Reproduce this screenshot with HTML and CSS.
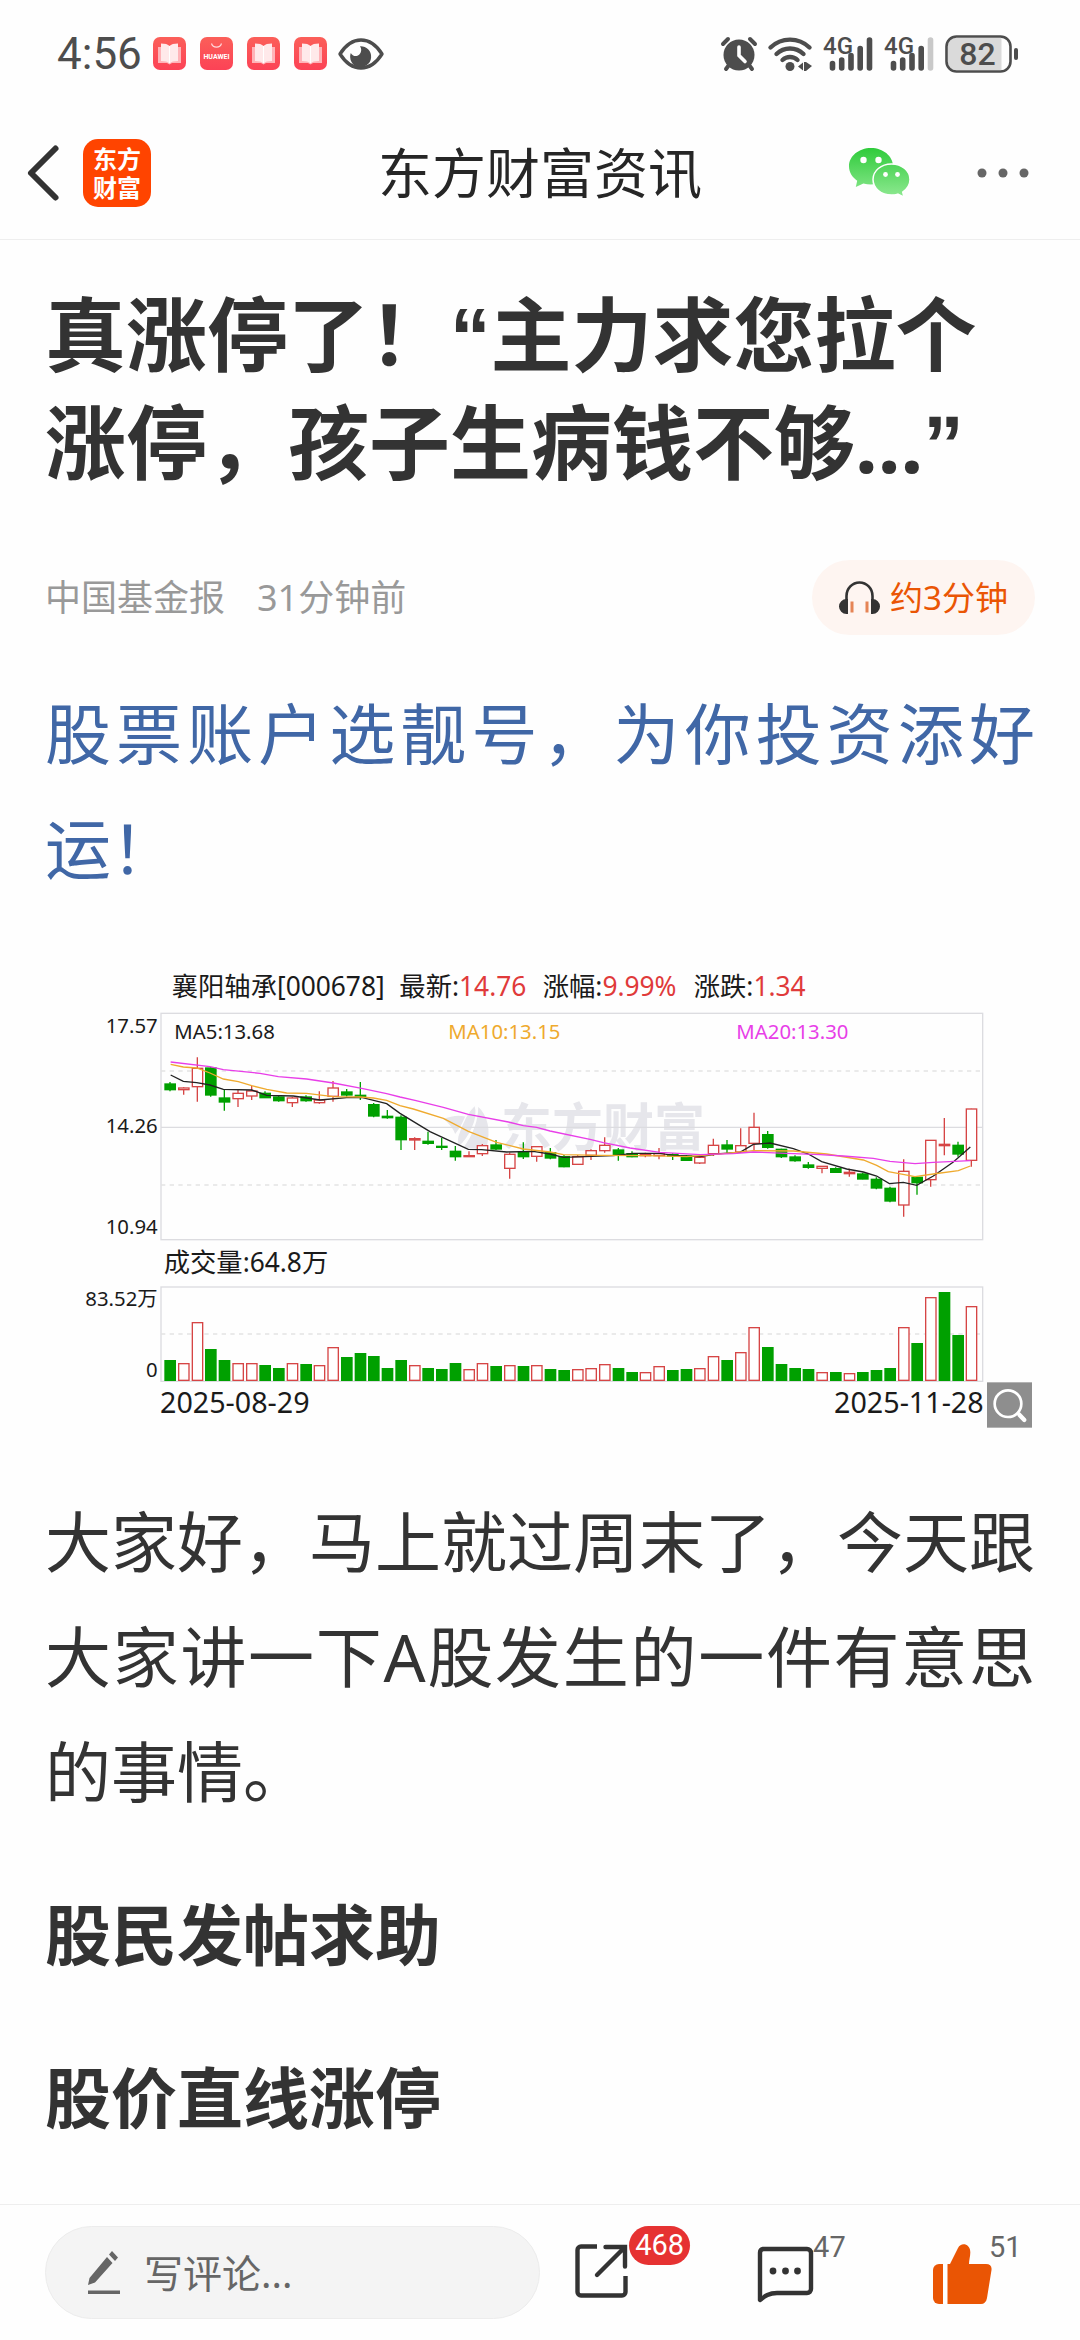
FILE: index.html
```html
<!DOCTYPE html>
<html lang="zh-CN">
<head>
<meta charset="utf-8">
<meta name="viewport" content="width=device-width, initial-scale=1">
<title>东方财富资讯</title>
<link rel="stylesheet" href="styles.css">
</head>
<body>
<svg class="defs" aria-hidden="true">
  <defs>
    <linearGradient id="red" x1="0" y1="0" x2="0" y2="1"><stop offset="0" stop-color="#fb5f59"/><stop offset="1" stop-color="#fc4256"/></linearGradient>
    <linearGradient id="green" gradientUnits="userSpaceOnUse" x1="0" y1="0" x2="0" y2="48"><stop offset="0" stop-color="#2fcb3b"/><stop offset="1" stop-color="#8ce88f"/></linearGradient>
    <symbol id="book" viewBox="0 0 33 33">
      <rect width="33" height="33" rx="7" fill="url(#red)"/>
      <path d="M5 10h23v16H19l-2.500 1.500L14 26H5z" fill="#ffb3b8"/>
      <path d="M8 6.500c4 0 7 .8 8.500 2.500C18 7.300 21 6.500 25 6.500V24c-4 0-7 .8-8.500 2.500C15 24.800 12 24 8 24z" fill="#ffe9ea"/>
      <path d="M16.500 9v17" stroke="#fff" stroke-width="1"/>
    </symbol>
  </defs>
</svg>

<div class="status">
  <div class="status-side">
    <span class="clock">4:56</span>
    <div class="notices">
      <svg width="33" height="33"><use href="#book"/></svg>
      <svg width="33" height="33" viewBox="0 0 33 33"><rect width="33" height="33" rx="7" fill="url(#red)"/><path d="M11.500 6.500a5.200 5 0 0 0 10 0" fill="none" stroke="#ffd9dc" stroke-width="1.200"/><text class="tiny" x="16.500" y="21.500">HUAWEI</text></svg>
      <svg width="33" height="33"><use href="#book"/></svg>
      <svg width="33" height="33"><use href="#book"/></svg>
    </div>
    <svg width="46" height="32" viewBox="0 0 46 32"><path d="M2 16C8 6.500 15 2 23 2s15 4.500 21 14c-6 9.500-13 14-21 14S8 25.500 2 16z" fill="none" stroke="#4d4d4d" stroke-width="3.400" stroke-linejoin="round"/><path d="M22 8.200A10.500 10.500 0 1 1 12.800 15c1.700 3.400 5.800 4 8.300 1.700 2.700-2.500 2.600-6.300.9-8.500z" fill="#4d4d4d"/></svg>
  </div>
  <div class="status-side icons">
    <svg width="36" height="34" viewBox="0 0 36 34"><g fill="none" stroke="#4d4d4d" stroke-width="4" stroke-linecap="round"><path d="M2 7l5-5M34 7l-5-5M8 28l-3 4M28 28l3 4"/></g><circle cx="18" cy="18" r="15.500" fill="#4d4d4d"/><path d="M18 10v8.500l6 6" fill="none" stroke="#fff" stroke-width="3.600" stroke-linecap="round"/></svg>
    <svg width="44" height="34" viewBox="0 0 44 34"><g fill="none" stroke="#4d4d4d" stroke-width="4.400" stroke-linecap="round"><path d="M2.500 10.500a28 28 0 0 1 39 0M8.500 17a19.500 19.500 0 0 1 27 0M14.500 23a11 11 0 0 1 15 0"/></g><circle cx="22" cy="29.500" r="4.500" fill="#4d4d4d"/><path d="M30 29.500l5-4v8zM36 25v9h2v-9zM38 25l6 4-6 5z" fill="#4d4d4d"/></svg>
    <svg width="50" height="34" viewBox="0 0 50 34"><text class="net" x="0" y="17">4G</text><g stroke="#4d4d4d" stroke-width="5.600" stroke-linecap="round"><path d="M9.500 26.500v4.500M18.700 23v8M28 18.500v12.500M37.200 11.500v19.500M46.500 3v28"/></g></svg>
    <svg width="50" height="34" viewBox="0 0 50 34"><text class="net" x="0" y="17">4G</text><g stroke="#4d4d4d" stroke-width="5.600" stroke-linecap="round"><path d="M9.500 26.500v4.500M18.700 23v8M28 18.500v12.500M37.200 11.500v19.500"/><path d="M46.500 3v28" stroke="#c9c9c9"/></g></svg>
    <svg width="74" height="38" viewBox="0 0 74 38"><path d="M10 3h46.500v32H10a7 7 0 0 1-7-7V10a7 7 0 0 1 7-7z" fill="#dadada"/><rect x="1.500" y="1.500" width="64" height="35" rx="10" fill="none" stroke="#4d4d4d" stroke-width="2.600"/><rect x="69" y="13" width="4" height="12" rx="2" fill="#4d4d4d"/><text class="level" x="32.500" y="30">82</text></svg>
  </div>
</div>

<header class="bar">
  <div class="bar-side">
    <button class="plain" type="button" aria-label="返回"><svg width="32" height="56" viewBox="0 0 32 56"><path d="M28.500 3.500L4 28l24.500 24.500" fill="none" stroke="#333" stroke-width="6" stroke-linecap="round" stroke-linejoin="round"/></svg></button>
    <a class="logo" href="#">东方<br>财富</a>
  </div>
  <h2 class="bar-title">东方财富资讯</h2>
  <div class="bar-side end">
    <button class="plain" type="button" aria-label="分享到微信"><svg width="62" height="50" viewBox="0 0 62 50"><path d="M22 0C9.800 0 0 8.200 0 18.300 0 24.200 3.200 29.300 8.200 32.700L6.800 39l7.600-3.600c2.600.7 5 1.100 7.600 1.100 12.200 0 22-8.100 22-18.200S34.200 0 22 0z" fill="url(#green)"/><path d="M42.500 16C32 16 24 22.900 24 31.500S32 47 42.500 47c2.300 0 4.300-.3 6.300-.9l6.200 3-1.300-5.100C58.200 41 61 36.600 61 31.500 61 22.900 53 16 42.500 16z" fill="url(#green)" stroke="#fff" stroke-width="1.500"/><g fill="#fff"><circle cx="14.500" cy="12" r="3.200"/><circle cx="29.500" cy="12" r="3.200"/><circle cx="36.500" cy="26.500" r="2.400"/><circle cx="48.500" cy="26.500" r="2.400"/></g></svg></button>
    <button class="plain" type="button" aria-label="更多"><svg width="52" height="10" viewBox="0 0 52 10" fill="#666"><circle cx="5" cy="5" r="4.500"/><circle cx="26" cy="5" r="4.500"/><circle cx="47" cy="5" r="4.500"/></svg></button>
  </div>
</header>

<main class="article">
  <h1 class="headline">真涨停了！<span class="quote">“</span>主力求您拉个涨停，孩子生病钱不够...<span class="quote">”</span></h1>
  <div class="meta">
    <span>中国基金报</span><time>31分钟前</time>
    <button class="listen" type="button"><svg width="41" height="33" viewBox="0 0 41 33"><path d="M7.500 20v-5a13 13.500 0 0 1 26 0v5" fill="none" stroke="#333" stroke-width="2.600"/><path d="M9 18v15H7.500a7.500 7.500 0 0 1 0-15zM32 18v15h1.500a7.500 7.500 0 0 0 0-15z" fill="#333"/><path d="M13 20.500v11M28 20.500v11" stroke="#e58455" stroke-width="3"/></svg>约3分钟</button>
  </div>
  <p class="para"><a href="#">股票账户选靓号，为你投资添好运！</a></p>

  <svg class="chart" viewBox="0 0 2970 1434" role="img" aria-label="襄阳轴承日K线">
    <g class="watermark">
      <path d="M1192 506q44-18 78-6l-40 56q-8-26-38-50z"/>
      <path d="M1238 560q20-66 52-96 10 30-8 70-18 40-42 58-6-16-2-32z"/>
      <path d="M1252 594q46-60 46-128 50 46 28 130-36 6-74-2z"/>
      <text x="1368" y="588">东方财富</text>
    </g>
    <g class="grid">
      <rect x="348" y="190" width="2465" height="679"/>
      <rect x="348" y="1011" width="2465" height="283"/>
      <path d="M348 532h2465"/>
      <path class="dash" d="M348 363h2465M348 705h2465M348 1152h2465"/>
    </g>
    <g id="candles"></g>
    <g class="lines">
      <polyline stroke="#222" points="377,375 415,394 455,398 495,405 535,418 620,420 665,436 745,438 825,450 905,443 950,442 1025,461 1065,490 1155,545 1270,598 1310,599 1385,606 1465,604 1515,612 1555,622 1705,617 1765,610 1845,610 1885,616 1965,620 2025,611 2085,607 2125,583 2175,579 2245,596 2290,612 2330,635 2405,657 2455,666 2495,678 2533,701 2575,697 2615,706 2665,678 2725,636 2776,591"/>
      <polyline stroke="#efaa2e" points="377,343 415,351 455,354 495,369 535,387 580,395 620,407 665,418 725,429 785,430 865,440 945,441 985,444 1025,451 1065,467 1105,477 1195,505 1270,544 1355,577 1435,597 1515,606 1555,614 1665,616 1805,617 1925,620 2005,614 2125,602 2245,603 2345,612 2455,630 2495,646 2530,665 2610,680 2665,672 2740,662 2776,648"/>
      <polyline stroke="#e83ee8" points="377,336 495,350 535,359 645,370 700,380 785,387 865,399 950,415 1025,431 1065,441 1110,451 1195,472 1270,493 1390,516 1435,527 1475,532 1515,543 1635,568 1675,578 1755,594 1845,607 1965,614 2065,611 2125,606 2225,610 2325,614 2395,618 2485,625 2535,634 2610,641 2665,637 2776,632"/>
    </g>
    <g id="volumes"></g>
    <g class="label big">
      <text x="380" y="137">襄阳轴承[000678]</text>
      <text x="1063" y="137">最新:<tspan class="up">14.76</tspan></text>
      <text x="1493" y="137">涨幅:<tspan class="up">9.99%</tspan></text>
      <text x="1946" y="137">涨跌:<tspan class="up">1.34</tspan></text>
      <text x="356" y="966">成交量:64.8万</text>
    </g>
    <g class="label small">
      <text x="388" y="267">MA5:13.68</text>
      <text x="1210" y="267" class="ma10">MA10:13.15</text>
      <text x="2074" y="267" class="ma20">MA20:13.30</text>
      <g text-anchor="end">
        <text x="338" y="248">17.57</text>
        <text x="338" y="549">14.26</text>
        <text x="338" y="852">10.94</text>
        <text x="338" y="1068">83.52万</text>
        <text x="338" y="1282">0</text>
      </g>
    </g>
    <g class="label date">
      <text x="345" y="1390">2025-08-29</text>
      <text x="2816" y="1390" text-anchor="end">2025-11-28</text>
    </g>
    <rect x="2826" y="1297" width="135" height="136" fill="#8e8e8e"/>
    <g fill="none" stroke="#fff" stroke-linecap="round"><circle cx="2889" cy="1361" r="40" stroke-width="8"/><path d="M2918 1390l6 5" stroke-width="8"/><path d="M2923 1394l15 16" stroke-width="13"/></g>
  </svg>

  <p class="para">大家好，马上就过周末了，今天跟大家讲一下A股发生的一件有意思的事情。</p>
  <p class="para strong">股民发帖求助</p>
  <p class="para strong">股价直线涨停</p>
</main>

<footer class="tools">
  <label class="comment">
    <svg width="32" height="44" viewBox="0 0 32 44" fill="#666"><path d="M0 34l1.500-7L19 6l5.500 6L7 31.500zM21 3.500L24 0l6 6.500-3 3.500zM0 39.500h32V43H0z"/></svg>
    <input type="text" placeholder="写评论..." aria-label="写评论">
  </label>
  <div class="actions">
    <button class="action" type="button" aria-label="分享"><svg width="54" height="54" viewBox="0 0 54 54" fill="none" stroke="#333" stroke-width="4.400"><path d="M22 2.500H6A3.500 3.500 0 0 0 2.500 6v42A3.500 3.500 0 0 0 6 51.500h41a3.500 3.500 0 0 0 3.500-3.500V32"/><path d="M30.500 3H50v19.500M49 4L22 31" stroke-linecap="round"/></svg><span class="count badge">468</span></button>
    <button class="action" type="button" aria-label="评论"><svg width="56" height="56" viewBox="0 0 56 56"><path d="M6 5h44a4 4 0 0 1 4 4v36a4 4 0 0 1-4 4H20c-8 0-12 3-17 7V9a4 4 0 0 1 3-4z" fill="none" stroke="#333" stroke-width="4.400" stroke-linejoin="round"/><g fill="#333"><circle cx="16" cy="27" r="3.400"/><circle cx="28.500" cy="27" r="3.400"/><circle cx="40.500" cy="27" r="3.400"/></g></svg><span class="count">47</span></button>
    <button class="action" type="button" aria-label="点赞"><svg width="56" height="60" viewBox="0 0 56 60" fill="#ea5504"><path d="M6 20h4v40H6a6 6 0 0 1-6-6V26a6 6 0 0 1 6-6z"/><path d="M14.500 20H17L25 4c3-6 12-4.500 12.300 4 .1 4-1.300 8-1.300 12h17c4 0 6 2 5.500 6L54 54c-.7 4-3 6-6 6H14.500z"/></svg><span class="count">51</span></button>
  </div>
</footer>
<script src="chart.js"></script>
</body>
</html>
```

FILE: styles.css
```css
* { box-sizing: border-box; }

body {
  margin: 0;
  min-height: 100vh;
  display: flex;
  flex-direction: column;
  background: #fefefe;
  color: #333;
  font-family: "Noto Sans", "Noto Sans CJK SC", sans-serif;
}

h1, h2, p { margin: 0; }
svg { display: block; flex: none; overflow: visible; }
a { color: inherit; text-decoration: none; }
button { font: inherit; color: inherit; background: none; border: 0; padding: 0; }
.defs { position: absolute; width: 0; height: 0; }

/* system status line */
.status {
  height: 107px;
  padding: 0 61px 0 57px;
  display: flex;
  justify-content: space-between;
  align-items: center;
  color: #4d4d4d;
}
.status-side { display: flex; align-items: center; gap: 11px; }
.notices { display: flex; gap: 14px; }
.clock { font: 44px/52px Roboto, sans-serif; }
.tiny { font: bold 7px Roboto, sans-serif; fill: #fff; text-anchor: middle; }
.net { font: 500 24px Roboto, sans-serif; fill: #4d4d4d; }
.level { font: 500 32px Roboto, sans-serif; fill: #4d4d4d; text-anchor: middle; }

/* title bar */
.bar {
  height: 133px;
  padding: 0 51px 0 27px;
  display: flex;
  align-items: center;
  border-bottom: 1px solid #eee;
}
.bar-side { flex: 1; display: flex; align-items: center; gap: 24px; }
.bar-side.end { justify-content: flex-end; gap: 66px; }
.bar-title { font-size: 54px; line-height: 80px; font-weight: 400; color: #262626; padding-left: 24px; }
.logo {
  width: 68px;
  height: 68px;
  padding-top: 4px;
  border-radius: 15px;
  background: #ff4400;
  color: #fff;
  text-align: center;
  font-family: "Noto Sans CJK SC", sans-serif;
  font-size: 24px;
  line-height: 29px;
  font-weight: 700;
}

/* article */
.article { padding: 40px 45px 48px; flex: 1; }
.headline { font-size: 81px; line-height: 108px; font-weight: 700; }
.quote { font-family: "Liberation Sans", sans-serif; line-height: 60px; }
.meta {
  margin-top: 64px;
  display: flex;
  align-items: center;
  gap: 32px;
  font-size: 36px;
  line-height: 48px;
  color: #999;
}
.listen {
  margin-left: auto;
  height: 75px;
  padding: 0 27px;
  display: flex;
  align-items: center;
  gap: 10px;
  border-radius: 38px;
  background: #fef5f1;
  color: #ea5504;
  font-size: 33px;
}
.para {
  margin-top: 48px;
  font-size: 66px;
  line-height: 115px;
  text-align: justify;
}
.meta + .para { margin-top: 41px; }
.para a { color: #4067a6; }
.strong { font-weight: 700; }

/* stock chart */
.chart { width: 100%; height: auto; margin: 44px 0 56px; }
.chart + .para { margin-top: 0; }
.watermark { fill: #e6e6eb; font: 700 153px "Noto Sans CJK SC", sans-serif; }
.watermark path { stroke: #fefefe; stroke-width: 4; }
.grid { fill: none; stroke: #dcdce0; stroke-width: 4; }
.dash { stroke: #e4e4e4; stroke-dasharray: 13 13; }
.lines { fill: none; stroke-width: 4; }
.up-bar { fill: #fff; stroke: #d64545; stroke-width: 4; }
.down-bar { fill: #00a000; stroke: #00a000; stroke-width: 4; }
.label { fill: #1a1a1a; }
.big { font-size: 79px; }
.small { font-size: 61px; }
.date { font-size: 86px; }
.up { fill: #e03a3a; }
.ma10 { fill: #efaa2e; }
.ma20 { fill: #e83ee8; }

/* bottom toolbar */
.tools {
  position: sticky;
  bottom: 0;
  height: 136px;
  padding: 21px 45px;
  display: grid;
  grid-template-columns: minmax(0, 14fr) minmax(0, 13fr);
  gap: 35px;
  border-top: 1px solid #eee;
  background: #fefefe;
}
.comment {
  height: 93px;
  padding: 0 42px;
  display: flex;
  align-items: center;
  gap: 24px;
  border: 1px solid #ececec;
  border-radius: 47px;
  background: #f4f4f4;
}
.comment input {
  flex: 1;
  min-width: 0;
  border: 0;
  padding: 0;
  background: none;
  outline: none;
  font: 39px/60px "Noto Sans", "Noto Sans CJK SC", sans-serif;
  color: #666;
}
.comment input::placeholder { color: #666; opacity: 1; }
.actions { display: grid; grid-template-columns: 182fr 176fr 102fr; }
.action { display: flex; align-items: flex-start; height: 92px; }
.action svg { margin-top: 18px; }
.count { font: 29px/42px Roboto, sans-serif; color: #666; }
.badge {
  padding: 0 6px;
  height: 39px;
  line-height: 39px;
  border-radius: 20px;
  background: #e63232;
  color: #fff;
}
```

FILE: chart.js
```js
// One row per trading day: rising flag, high, body top, body bottom, low, volume height
const days = [
  [0,396,402,419,424,20],[1,412,414,419,434,17],[1,322,355,410,455,58],[0,352,354,435,440,31],
  [0,418,444,456,482,20],[1,420,430,446,471,17],[1,407,423,438,450,17],[0,424,430,443,443,15],
  [0,436,441,452,455,12],[1,441,444,458,471,17],[0,436,441,452,455,16],[1,424,450,458,461,15],
  [1,393,414,439,455,33],[0,417,426,435,440,23],[0,396,436,440,450,27],[0,459,464,498,502,24],
  [0,480,499,503,506,12],[0,496,502,569,600,20],[1,562,566,570,600,15],[0,545,574,580,584,12],
  [0,564,589,592,600,11],[0,588,604,620,632,17],[1,604,617,620,620,11],[1,582,587,611,618,17],
  [0,570,585,597,600,14],[1,608,613,655,686,15],[0,577,606,620,627,14],[1,588,590,619,635,15],
  [0,594,608,624,628,11],[0,615,620,650,652,10],[1,615,620,643,645,11],[1,598,602,616,630,12],
  [1,562,586,602,608,16],[0,594,600,615,632,12],[0,604,611,620,622,8],[1,608,613,617,622,8],
  [1,594,611,617,628,14],[0,610,614,618,630,10],[0,616,618,631,632,11],[1,618,622,639,642,12],
  [1,566,586,611,618,24],[0,570,585,597,608,20],[1,535,587,606,608,28],[1,488,532,580,602,53],
  [0,543,554,592,596,33],[0,596,598,620,624,16],[0,616,621,632,635,12],[0,636,645,652,656,11],
  [1,648,649,655,670,8],[0,652,656,667,668,8],[1,656,667,671,680,7],[0,668,672,687,688,8],
  [0,682,688,714,718,10],[0,710,715,753,757,12],[1,628,664,765,800,53],[0,680,682,698,734,37],
  [1,570,571,689,710,83],[1,504,583,587,616,88],[0,575,586,612,620,45],[1,476,477,631,650,74]
];

const NS = "http://www.w3.org/2000/svg";
const candles = document.getElementById("candles");
const volumes = document.getElementById("volumes");

function add(parent, name, attrs) {
  const node = document.createElementNS(NS, name);
  for (const key in attrs) node.setAttribute(key, attrs[key]);
  parent.appendChild(node);
}

days.forEach(([rising, high, top, bottom, low, volume], i) => {
  const x = Math.round(375 + i * 40.75);
  const kind = rising ? "up-bar" : "down-bar";
  // day 57 closed as a doji: red candle, green volume
  const volumeKind = i === 57 ? "down-bar" : kind;
  add(candles, "path", { class: kind, d: `M${x} ${high}V${low}` });
  add(candles, "rect", { class: kind, x: x - 15, y: top, width: 31, height: Math.max(bottom - top, 1) });
  add(volumes, "rect", { class: volumeKind, x: x - 15, y: 1292 - volume * 3, width: 31, height: volume * 3 - 1 });
});
```
